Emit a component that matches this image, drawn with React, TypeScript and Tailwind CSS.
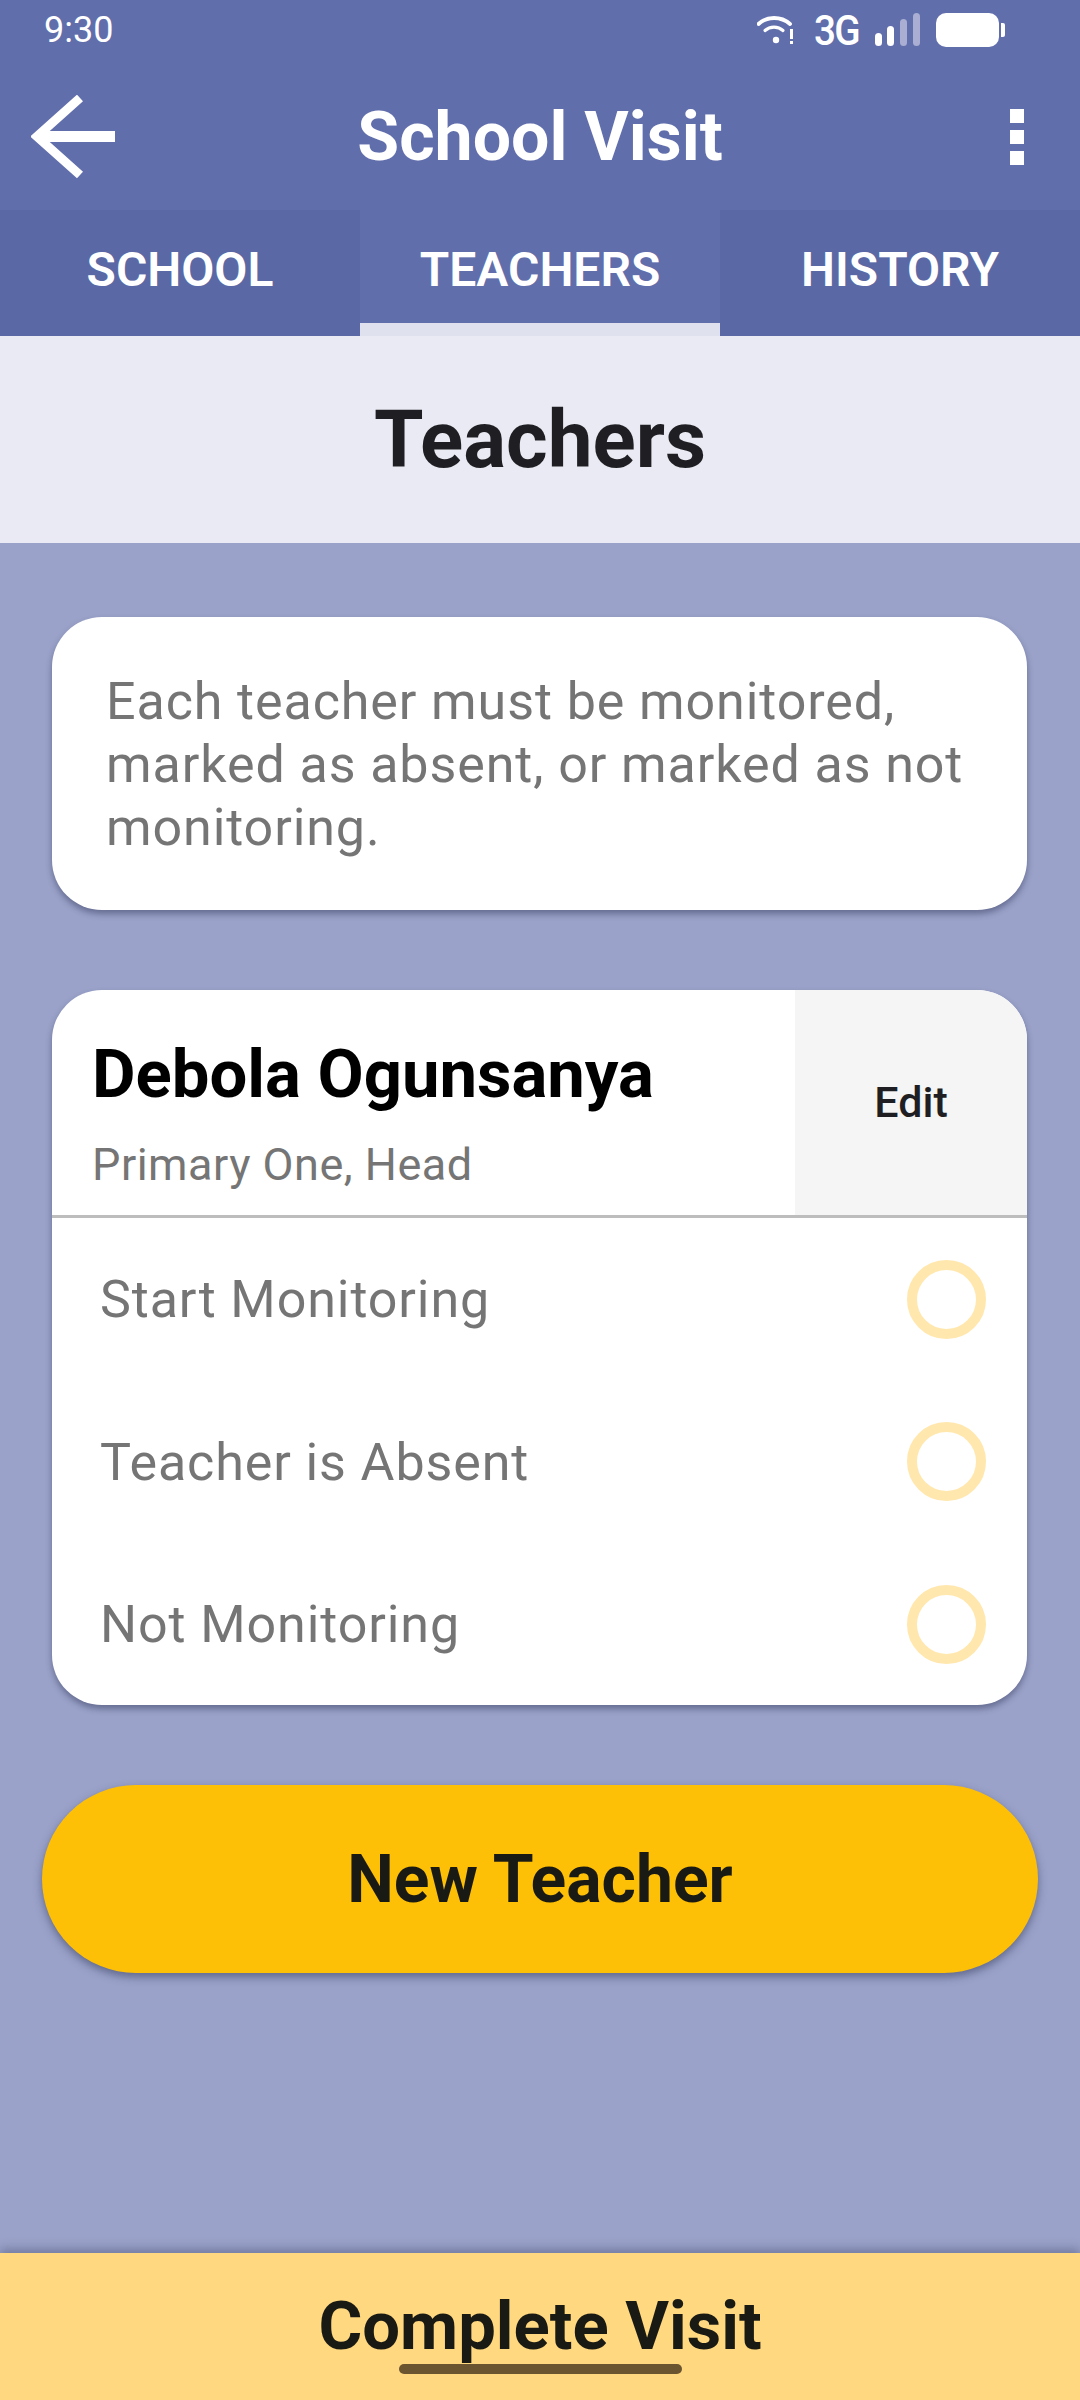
import React from 'react';

const options = ['Start Monitoring', 'Teacher is Absent', 'Not Monitoring'];
const tabs = ['SCHOOL', 'TEACHERS', 'HISTORY'];

const StatusIcons = () => (
  <div className="flex items-center">
    <svg width="37" height="30" viewBox="0 0 37 30" className="mr-[20px]">
      <path d="M1.500 9 C10 1 24 1 33 9" fill="none" stroke="#fff" strokeWidth="3.8" strokeLinecap="round" />
      <path d="M8 15.500 C13 11 21 11 26 15.500" fill="none" stroke="#fff" strokeWidth="3.2" strokeLinecap="round" />
      <circle cx="19" cy="25" r="3.200" fill="#fff" />
      <rect x="33" y="14" width="3" height="10" fill="#fff" />
      <rect x="33" y="26" width="3" height="3" fill="#fff" />
    </svg>
    <span className="mr-[17px] w-[44px] origin-left scale-x-[0.9] text-[43px] leading-[38px] font-medium tracking-[-2px] text-white">3G</span>
    <svg width="45" height="33" viewBox="0 0 45 33" className="mr-[16px]">
      <rect x="0" y="20" width="7" height="13" rx="3.500" fill="#fff" />
      <rect x="12" y="13" width="7" height="20" rx="3.500" fill="#fff" />
      <rect x="25" y="6" width="7" height="27" rx="3.500" fill="#a9aed2" />
      <rect x="38" y="0" width="7" height="33" rx="3.500" fill="#a9aed2" />
    </svg>
    <div className="h-[34px] w-[63px] rounded-[10px] bg-white" />
    <div className="ml-[2px] h-[14px] w-[4px] rounded-r-[2px] bg-white" />
  </div>
);

const App = () => {
  return (
    <div className="flex h-[2400px] w-[1080px] flex-col bg-[#9aa2c9] font-['Roboto',sans-serif]">
      <div className="h-[210px] bg-[#616eac]">
        <div className="flex h-[56px] items-center justify-between pl-[44px] pr-[75px] pt-[3px]">
          <span className="text-[36px] leading-[40px] text-white">9:30</span>
          <StatusIcons />
        </div>
        <div className="grid grid-cols-[1fr_auto_1fr] items-center px-[31px] pt-[39px]">
          <svg width="85" height="84" viewBox="0 0 85 84">
            <path d="M84 41.500 H8" fill="none" stroke="#fff" strokeWidth="11" />
            <path d="M49 3 L6 41.500 L49 80" fill="none" stroke="#fff" strokeWidth="9" />
          </svg>
          <h1 className="text-[68px] leading-[80px] font-bold text-white">School Visit</h1>
          <div className="mr-[25px] flex w-[14px] flex-col gap-[7px] justify-self-end">
            <div className="h-[14px] bg-white" />
            <div className="h-[14px] bg-white" />
            <div className="h-[14px] bg-white" />
          </div>
        </div>
      </div>

      <div className="flex h-[126px] text-[48px] leading-[54px] font-semibold text-white">
        {tabs.map((tab) => (
          <div
            key={tab}
            className={
              tab === 'TEACHERS'
                ? 'flex w-[360px] items-start justify-center border-b-[13px] border-[#dfe1ee] bg-[#616eac] pt-[33px]'
                : 'flex w-[360px] items-start justify-center bg-[#5a69a5] pt-[33px]'
            }
          >
            {tab}
          </div>
        ))}
      </div>

      <div className="flex h-[207px] items-center justify-center bg-[#e9eaf3]">
        <h2 className="text-[80px] leading-[90px] font-bold text-[#1f1f23]">Teachers</h2>
      </div>

      <div className="pl-[52px] pr-[53px] pt-[74px]">
        <div className="h-[293px] rounded-[50px] bg-white pl-[54px] pr-[50px] pt-[53px] shadow-[0_4px_6px_rgba(40,45,80,0.45)]">
          <p className="text-[52px] leading-[63px] tracking-[0.9px] text-[#757575]">
            Each teacher must be monitored, marked as absent, or marked as not monitoring.
          </p>
        </div>

        <div className="mt-[80px] h-[715px] overflow-hidden rounded-[50px] bg-white shadow-[0_4px_6px_rgba(40,45,80,0.45)]">
          <div className="flex h-[228px] border-b-[3px] border-[#bdbdbd]">
            <div className="flex-1 pl-[40px] pt-[49px]">
              <div className="text-[67px] leading-[70px] font-bold text-black">Debola Ogunsanya</div>
              <div className="mt-[30px] text-[45px] leading-[52px] tracking-[0.5px] text-[#757575]">Primary One, Head</div>
            </div>
            <div className="flex w-[232px] items-center justify-center bg-[#f5f5f5] text-[43px] font-medium text-[#1f1f23]">Edit</div>
          </div>
          {options.map((label) => (
            <div key={label} className="flex h-[162.500px] items-center justify-between pl-[48px] pr-[41px]">
              <span className="pt-[2px] text-[52px] leading-[60px] tracking-[0.9px] text-[#757575]">{label}</span>
              <div className="h-[79px] w-[79px] rounded-full border-[10px] border-[#ffe7ad]" />
            </div>
          ))}
        </div>
      </div>

      <div className="px-[42px] pt-[80px]">
        <button className="flex h-[188px] w-full items-center justify-center rounded-[94px] bg-[#fec007] text-[66px] font-bold text-[#1a1a14] shadow-[0_4px_8px_rgba(40,45,80,0.5)]">
          New Teacher
        </button>
      </div>

      <div className="relative mt-auto flex h-[147px] justify-center bg-[#ffd87f] pt-[37px] text-[67px] leading-[72px] font-bold text-[#1a1a14] shadow-[0_-4px_10px_rgba(40,45,80,0.35)]">
        Complete Visit
        <div className="absolute bottom-[26px] left-[399px] h-[10px] w-[283px] rounded-full bg-[#6a5530]" />
      </div>
    </div>
  );
};

export default App;
